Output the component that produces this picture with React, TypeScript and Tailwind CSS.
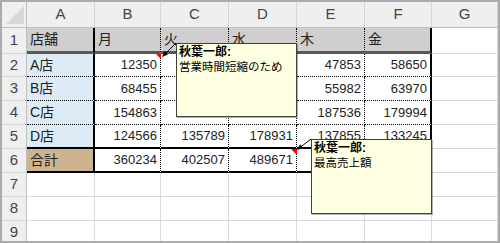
const COLS = ["A", "B", "C", "D", "E", "F", "G"];

type Val = string | number | null;

// sheet contents, rows 1..9, columns A..G
const sheet: Val[][] = [
  ["店舗", "月", "火", "水", "木", "金", null],
  ["A店", 12350, null, null, 47853, 58650, null],
  ["B店", 68455, null, null, 55982, 63970, null],
  ["C店", 154863, null, null, 187536, 179994, null],
  ["D店", 124566, 135789, 178931, 137855, 133245, null],
  ["合計", 360234, 402507, 489671, null, null, null],
  [null, null, null, null, null, null, null],
  [null, null, null, null, null, null, null],
  [null, null, null, null, null, null, null],
];

function bgClass(r: number, c: number) {
  if (r === 1 && c <= 5) return "bg-[#d0cece]";
  if (c === 0 && r >= 2 && r <= 5) return "bg-[#ddebf7]";
  if (c === 0 && r === 6) return "bg-[#ccb48f]";
  return "bg-white";
}

function rightBorder(r: number, c: number) {
  if (r <= 6 && (c === 0 || c === 5)) return "border-r-2 border-r-black";
  if (r <= 6 && c >= 1 && c <= 4) return "border-r border-r-black [border-right-style:dotted]";
  return "border-r border-r-[#dadada]";
}

function bottomBorder(r: number, c: number) {
  if (c <= 5) {
    if (r === 1) return "border-b-[3px] border-b-[#595959]";
    if (r >= 2 && r <= 4) return "border-b border-b-black [border-bottom-style:dotted]";
    if (r === 5 || r === 6) return "border-b-2 border-b-black";
  }
  return "border-b border-b-[#dadada]";
}

function Cell({ r, c, v }: { r: number; c: number; v: Val }) {
  const isNum = typeof v === "number";
  return (
    <div
      className={`flex items-center overflow-hidden whitespace-nowrap ${bgClass(r, c)} ${rightBorder(r, c)} ${bottomBorder(r, c)} ${
        isNum ? "justify-end pr-[3px] text-[13px]" : "justify-start pl-[3px] text-[14px]"
      } text-[#222]`}
    >
      {v}
    </div>
  );
}

function Note({ pos, text }: { pos: string; text: string }) {
  return (
    <div
      className={`absolute ${pos} w-[121px] bg-[#ffffe1] border border-[#404040] shadow-[1px_1px_0_rgba(0,0,0,0.3)] px-[2px] pt-[1px] text-black`}
    >
      <div className="text-[12px] font-bold leading-[15px]">秋葉一郎:</div>
      <div className="text-[11.5px] leading-[15px]">{text}</div>
    </div>
  );
}

export default function App() {
  return (
    <div className="relative w-[500px] h-[243px] overflow-hidden border-2 border-[#ababab] bg-white font-['Liberation_Sans','Noto_Sans_CJK_JP',sans-serif]">
      <div className="grid grid-cols-[25px_68px_66px_68px_68px_68px_67px_66px] grid-rows-[26px_26px_23px_24px_24px_24px_24px_24px_24px_24px]">
        {/* corner */}
        <div className="flex items-end justify-end bg-[#efefef] border-r border-r-[#bfbfbf] border-b border-b-[#bfbfbf] pb-[3px] pr-[2px]">
          <svg width="18" height="18" viewBox="0 0 18 18">
            <polygon points="18,0 18,18 0,18" fill="#d8d8d8" />
          </svg>
        </div>
        {COLS.map((col) => (
          <div
            key={col}
            className="flex items-center justify-center bg-[#efefef] border-r border-r-[#d4d4d4] border-b border-b-[#bfbfbf] text-[15px] text-[#444]"
          >
            {col}
          </div>
        ))}
        {sheet.map((row, i) => (
          <div key={i} className="contents">
            <div className="flex items-center justify-center bg-[#efefef] border-r border-r-[#bfbfbf] border-b border-b-[#d4d4d4] text-[15px] text-[#444]">
              {i + 1}
            </div>
            {row.map((v, c) => (
              <Cell key={c} r={i + 1} c={c} v={v} />
            ))}
          </div>
        ))}
      </div>

      <Note pos="left-[174px] top-[41px] h-[74px]" text="営業時間短縮のため" />
      <Note pos="left-[309px] top-[137px] h-[75px]" text="最高売上額" />

      {/* comment indicators and pointer arrows */}
      <svg className="pointer-events-none absolute left-0 top-0" width="496" height="239" viewBox="0 0 496 239">
        <polygon points="154,52 159,52 159,57" fill="#ff0000" />
        <line x1="174" y1="41" x2="163" y2="52" stroke="#000" strokeWidth="1" />
        <polygon points="160,55 166,52.6 162.4,49" fill="#000" />

        <polygon points="289,147 295,147 295,153" fill="#ff0000" />
        <line x1="309" y1="137" x2="298" y2="145.5" stroke="#000" strokeWidth="1" />
        <polygon points="295,148 301.3,146.3 298.2,142.3" fill="#000" />
      </svg>
    </div>
  );
}
